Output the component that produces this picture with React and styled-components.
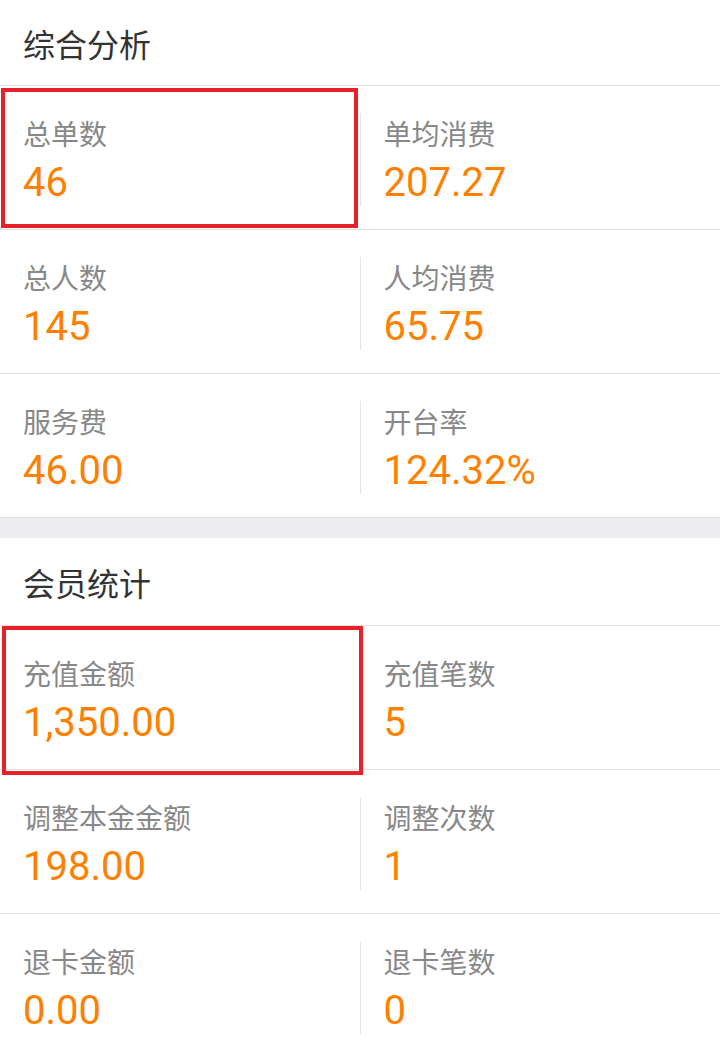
import React from "react";
import styled, { createGlobalStyle } from "styled-components";

const sections = [
  {
    title: "综合分析",
    head: 85,
    rows: [
      [
        { label: "总单数", value: "46", mark: "2px 2px 1px 1px" },
        { label: "单均消费", value: "207.27" },
      ],
      [
        { label: "总人数", value: "145" },
        { label: "人均消费", value: "65.75" },
      ],
      [
        { label: "服务费", value: "46.00" },
        { label: "开台率", value: "124.32%" },
      ],
    ],
  },
  {
    title: "会员统计",
    head: 87,
    rows: [
      [
        { label: "充值金额", value: "1,350.00", mark: "0 -3px -6px 2px" },
        { label: "充值笔数", value: "5" },
      ],
      [
        { label: "调整本金金额", value: "198.00" },
        { label: "调整次数", value: "1" },
      ],
      [
        { label: "退卡金额", value: "0.00" },
        { label: "退卡笔数", value: "0" },
      ],
    ],
  },
];

const App = () => {
  return (
    <Page>
      <GlobalStyle />
      {sections.map((section, i) => (
        <Section key={section.title} $gap={i > 0}>
          <Header $h={section.head}>{section.title}</Header>
          {section.rows.map((row, r) => (
            <Row key={r}>
              <Cell>
                <Label>{row[0].label}</Label>
                <Value>{row[0].value}</Value>
                {row[0].mark && <Mark $inset={row[0].mark} />}
              </Cell>
              <Divider />
              <Cell>
                <Label>{row[1].label}</Label>
                <Value>{row[1].value}</Value>
              </Cell>
            </Row>
          ))}
        </Section>
      ))}
    </Page>
  );
};

export default App;

const GlobalStyle = createGlobalStyle`
  html, body {
    margin: 0;
    padding: 0;
    background: #fff;
  }
  * {
    box-sizing: border-box;
  }
`;

const Page = styled.div`
  width: 720px;
  min-height: 1052px;
  background: #fff;
  font-family: Roboto, "Noto Sans CJK SC", sans-serif;
`;

const Section = styled.section`
  background: #fff;
  border-top: ${(props) => (props.$gap ? "20px solid #ebebf0" : "none")};
`;

const Header = styled.div`
  height: ${(props) => props.$h + 1}px;
  display: flex;
  align-items: center;
  padding-left: 23px;
  font-family: "Noto Sans CJK SC", sans-serif;
  font-size: 32px;
  color: #333;
  border-bottom: 1px solid #e2e2e2;
`;

const Row = styled.div`
  display: flex;
  height: 144px;
  border-bottom: 1px solid #e2e2e2;
`;

const Cell = styled.div`
  position: relative;
  flex: 1;
  padding: 29px 0 0 23px;
  display: flex;
  flex-direction: column;
  gap: 8px;
`;

const Divider = styled.span`
  width: 1px;
  height: 93px;
  margin-top: 27px;
  background: #e4e4e4;
`;

const Label = styled.div`
  font-family: "Noto Sans CJK SC", sans-serif;
  font-size: 28px;
  line-height: 36px;
  color: #888;
`;

const Value = styled.div`
  font-family: Roboto, sans-serif;
  font-size: 40px;
  line-height: 48px;
  color: #ff7f00;
`;

const Mark = styled.span`
  position: absolute;
  inset: ${(props) => props.$inset};
  border: 4px solid #e8202a;
  pointer-events: none;
`;
